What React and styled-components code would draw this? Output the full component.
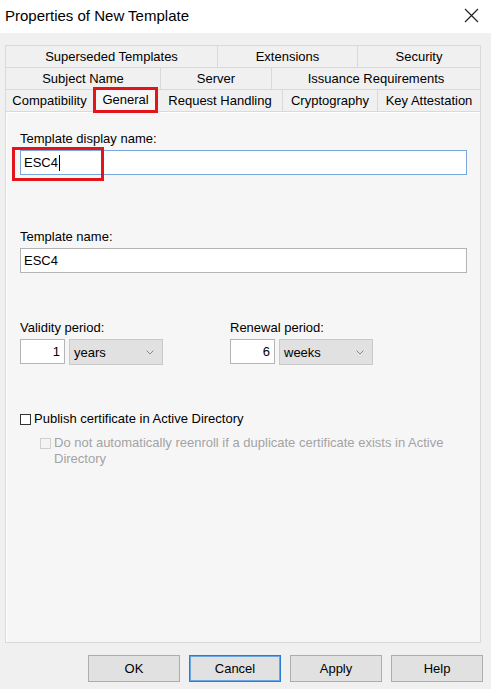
import React from 'react'
import styled, { createGlobalStyle } from 'styled-components'

const Global = createGlobalStyle`
  html, body {
    margin: 0;
    padding: 0;
    background: #f0f0f0;
  }
  body {
    font-family: "Liberation Sans", Arial, sans-serif;
    font-size: 13px;
    color: #000;
  }
`

const Window = styled.div`
  width: 491px;
  height: 689px;
  background: #f0f0f0;
  display: flex;
  flex-direction: column;
  overflow: hidden;
`

const TitleBar = styled.div`
  height: 33px;
  background: #fff;
  display: flex;
  align-items: center;
  justify-content: space-between;
  padding: 0 12px 3px 5px;
  box-sizing: border-box;
  font-size: 15px;
`

const Body = styled.div`
  padding: 12px 10px 0 5px;
  display: flex;
  flex-direction: column;
`

const TabRow = styled.div`
  display: flex;
  height: 22px;
  width: 476px;
`

const Tab = styled.div`
  position: relative;
  width: ${p => p.w}px;
  box-sizing: border-box;
  border: 1px solid #d9d9d9;
  border-bottom: none;
  margin-left: -1px;
  &:first-child { margin-left: 0; }
  background: ${p => (p.active ? '#f7f6f7' : '#f0f0f0')};
  display: flex;
  align-items: center;
  justify-content: center;
  white-space: nowrap;
  ${p => p.active && `
    margin-top: -2px;
    height: 25px;
    z-index: 2;
    padding-bottom: 2px;
  `}
`

const Highlight = styled.div`
  position: absolute;
  box-sizing: border-box;
  inset: ${p => p.inset || '0'};
  width: ${p => (p.w ? `${p.w}px` : 'auto')};
  height: ${p => (p.h ? `${p.h}px` : 'auto')};
  border: 3px solid #e3141c;
  pointer-events: none;
  z-index: 3;
`

const Panel = styled.div`
  height: 532px;
  width: 476px;
  box-sizing: border-box;
  border: 1px solid #d9d9d9;
  box-shadow: inset 1px 1px 0 #fff;
  background: #f7f6f7;
  padding: 19px 14px 0 14px;
  display: flex;
  flex-direction: column;
`

const Label = styled.div`
  line-height: 16px;
  margin-bottom: 3px;
`

const Field = styled.div`
  position: relative;
  display: flex;
  flex-direction: column;
  margin-bottom: ${p => p.gap || 0}px;
`

const TextInput = styled.div`
  width: 447px;
  height: 25px;
  box-sizing: border-box;
  background: #fff;
  border: 1px solid ${p => (p.focused ? '#7aa7dc' : '#b4b4b4')};
  display: flex;
  align-items: center;
  padding-left: 3px;
`

const Caret = styled.span`
  display: inline-block;
  width: 1px;
  height: 16px;
  background: #000;
  margin-left: 1px;
`

const PeriodRow = styled.div`
  display: flex;
  margin-bottom: ${p => p.gap || 0}px;
`

const PeriodGroup = styled.div`
  display: flex;
  flex-direction: column;
  width: 210px;
`

const Controls = styled.div`
  display: flex;
  gap: 4px;
`

const NumberBox = styled.div`
  width: 45px;
  height: 25px;
  box-sizing: border-box;
  background: #fff;
  border: 1px solid #b4b4b4;
  display: flex;
  align-items: center;
  justify-content: flex-end;
  padding-right: 4px;
`

const Select = styled.div`
  width: 94px;
  height: 26px;
  box-sizing: border-box;
  background: #e1e1e1;
  border: 1px solid #c9c9c9;
  display: flex;
  align-items: center;
  justify-content: space-between;
  padding: 0 8px 0 4px;
`

const CheckRow = styled.label`
  display: flex;
  align-items: flex-start;
  gap: 2px;
  margin-left: ${p => p.indent || 0}px;
  margin-bottom: ${p => p.gap || 0}px;
  color: ${p => (p.disabled ? '#a3a3a3' : '#000')};
  line-height: 16px;
`

const Box = styled.span`
  flex: none;
  width: 11px;
  height: 11px;
  margin-top: 3px;
  margin-right: 1px;
  box-sizing: border-box;
  border: 1px solid ${p => (p.disabled ? '#cfcfcf' : '#333')};
  background: ${p => (p.disabled ? '#f4f4f4' : '#fff')};
`

const Footer = styled.div`
  display: flex;
  justify-content: flex-end;
  gap: 9px;
  padding: 12px 0 0 0;
  width: 478px;
`

const Button = styled.button`
  width: 92px;
  height: 27px;
  box-sizing: border-box;
  font: inherit;
  font-size: 13px;
  color: #000;
  background: #e1e1e1;
  border: 1px solid ${p => (p.primary ? '#2a7ad6' : '#adadad')};
  ${p => p.primary && 'box-shadow: inset 0 0 0 1px #6aa6e6;'}
  padding: 0;
`

function CloseIcon() {
  return (
    <svg width="15" height="15" viewBox="0 0 15 15">
      <path d="M1 1 L14 14 M14 1 L1 14" stroke="#222" strokeWidth="1.2" />
    </svg>
  )
}

function Chevron() {
  return (
    <svg width="8" height="5" viewBox="0 0 8 5">
      <path d="M0.5 0.5 L4 4 L7.5 0.5" stroke="#8a8a8a" fill="none" strokeWidth="1" />
    </svg>
  )
}

const tabRows = [
  [['Superseded Templates', 213], ['Extensions', 141], ['Security', 124]],
  [['Subject Name', 156], ['Server', 112], ['Issuance Requirements', 210]],
  [['Compatibility', 89], ['General', 65, true], ['Request Handling', 126], ['Cryptography', 96], ['Key Attestation', 104]],
]

export default function App() {
  return (
    <Window>
      <Global />
      <TitleBar>
        <span>Properties of New Template</span>
        <CloseIcon />
      </TitleBar>
      <Body>
        {tabRows.map((row, i) => (
          <TabRow key={i}>
            {row.map(([name, w, active]) => (
              <Tab key={name} w={w} active={active}>
                {name}
                {active && <Highlight inset="-1px -1px -1px -1px" />}
              </Tab>
            ))}
          </TabRow>
        ))}
        <Panel>
          <Field gap={54}>
            <Label>Template display name:</Label>
            <TextInput focused>
              ESC4<Caret />
            </TextInput>
            <Highlight inset="16px auto auto -8px" w={92} h={34} />
          </Field>
          <Field gap={47}>
            <Label>Template name:</Label>
            <TextInput>ESC4</TextInput>
          </Field>
          <PeriodRow gap={46}>
            <PeriodGroup>
              <Label>Validity period:</Label>
              <Controls>
                <NumberBox>1</NumberBox>
                <Select>years<Chevron /></Select>
              </Controls>
            </PeriodGroup>
            <PeriodGroup>
              <Label>Renewal period:</Label>
              <Controls>
                <NumberBox>6</NumberBox>
                <Select>weeks<Chevron /></Select>
              </Controls>
            </PeriodGroup>
          </PeriodRow>
          <CheckRow gap={8}>
            <Box />
            Publish certificate in Active Directory
          </CheckRow>
          <CheckRow indent={20} disabled>
            <Box disabled />
            <span>Do not automatically reenroll if a duplicate certificate exists in Active<br />Directory</span>
          </CheckRow>
        </Panel>
        <Footer>
          <Button>OK</Button>
          <Button primary>Cancel</Button>
          <Button>Apply</Button>
          <Button>Help</Button>
        </Footer>
      </Body>
    </Window>
  )
}
